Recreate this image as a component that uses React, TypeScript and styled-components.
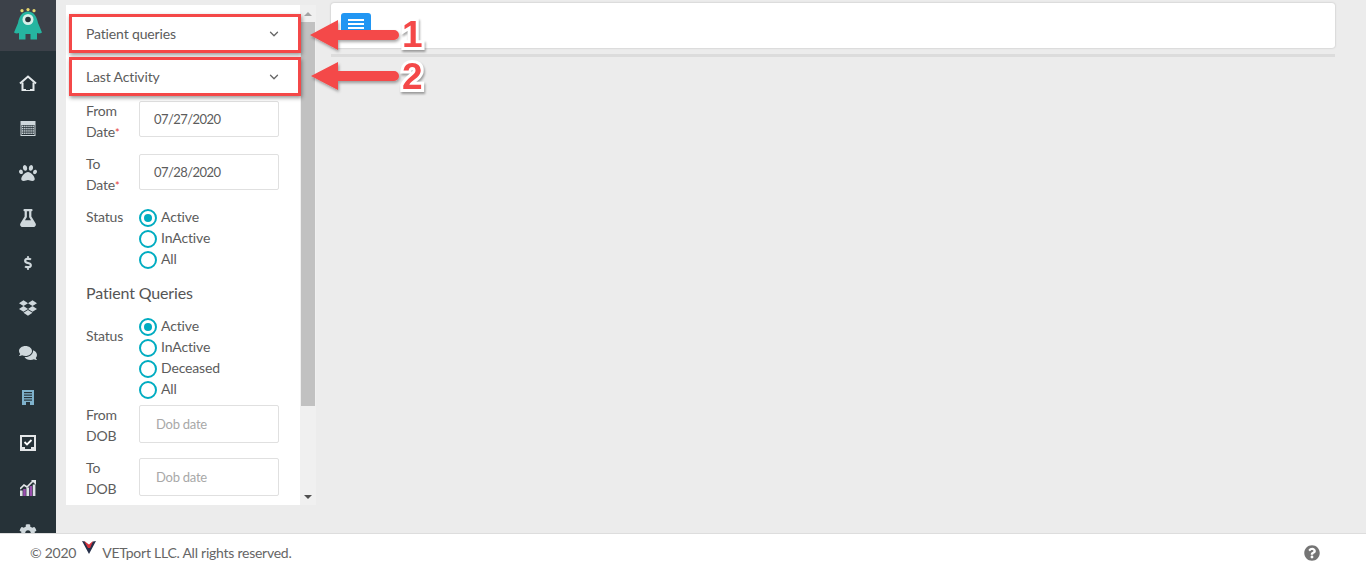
import React from "react";
import styled, { createGlobalStyle } from "styled-components";
import { FaPaw, FaFlask, FaDollarSign, FaDropbox, FaComments, FaCog, FaQuestionCircle } from "react-icons/fa";
import { ChevronDown } from "lucide-react";

const Global = createGlobalStyle`
  html, body { margin: 0; padding: 0; height: 570px; overflow: hidden; background: #ececec; }
  * { box-sizing: border-box; }
  body { font-family: "Lato", "Open Sans", sans-serif; font-size: 14px; color: #5c5c5c; letter-spacing: -0.15px; }
`;

const Page = styled.div`
  position: relative;
  width: 1366px;
  height: 570px;
  display: flex;
  flex-direction: column;
  overflow: hidden;
`;
const Main = styled.div`
  flex: 0 0 533px;
  display: flex;
  overflow: hidden;
`;
const Sidebar = styled.nav`
  flex: 0 0 56px;
  background: #263238;
  display: flex;
  flex-direction: column;
  overflow: hidden;
`;
const LogoBar = styled.div`
  flex: 0 0 51px;
  background: #3c4149;
  display: flex;
  align-items: center;
  justify-content: center;
`;
const NavList = styled.div`
  display: flex;
  flex-direction: column;
  padding-top: 9px;
`;
const NavItem = styled.div<{ $color?: string }>`
  flex: 0 0 45px;
  height: 45px;
  display: flex;
  align-items: center;
  justify-content: center;
  color: ${(p) => p.$color || "#cfd8dc"};
  font-size: 18px;
`;
const FilterColumn = styled.aside`
  flex: 0 0 250px;
  height: 500px;
  margin: 5px 0 0 10px;
  display: flex;
`;
const FilterPanel = styled.div`
  flex: 0 0 234px;
  background: #fff;
  padding: 8px 0 0 20px;
  overflow: hidden;
`;
const Dropdown = styled.div`
  height: 43px;
  width: 193px;
  display: flex;
  align-items: center;
  justify-content: space-between;
  padding: 0 0 2px 0;
`;
const Chevron = styled.span`
  display: flex;
  color: #666;
  margin-right: -2px;
`;
const DropdownGroup = styled.div`
  margin-bottom: 2px;
`;
const FormRow = styled.div<{ $gap?: number }>`
  display: grid;
  grid-template-columns: 53px 140px;
  margin-bottom: ${(p) => p.$gap ?? 12}px;
`;
const Label = styled.label<{ $top?: number }>`
  line-height: 21px;
  padding-top: ${(p) => p.$top ?? 0}px;
  margin-top: -1px;
  white-space: nowrap;
`;
const Req = styled.span`
  color: #e53935;
  font-size: 11px;
  line-height: 0;
`;
const Input = styled.div<{ $h: number; $placeholder?: boolean }>`
  height: ${(p) => p.$h}px;
  border: 1px solid #e0e0e0;
  border-radius: 2px;
  display: flex;
  align-items: center;
  padding-left: ${(p) => (p.$placeholder ? 16 : 14)}px;
  font-size: 13px;
  letter-spacing: ${(p) => (p.$placeholder ? "-0.25px" : "-0.55px")};
  color: ${(p) => (p.$placeholder ? "#a8a8a8" : "#5c5c5c")};
`;
const RadioGroup = styled.div`
  display: flex;
  flex-direction: column;
`;
const RadioRow = styled.div`
  height: 21px;
  display: flex;
  align-items: center;
  gap: 4px;
`;
const RadioText = styled.span`
  margin-top: -3px;
`;
const RadioDot = styled.span<{ $on?: boolean }>`
  width: 18px;
  height: 18px;
  margin-top: 1px;
  border-radius: 50%;
  border: 2px solid #00acc1;
  display: flex;
  align-items: center;
  justify-content: center;
  &::after {
    content: "";
    width: 8px;
    height: 8px;
    border-radius: 50%;
    background: ${(p) => (p.$on ? "#00acc1" : "transparent")};
  }
`;
const Heading = styled.h3`
  margin: 0 0 11px;
  font-size: 16px;
  font-weight: 400;
  line-height: 24px;
  color: #555;
`;
const Scrollbar = styled.div`
  flex: 0 0 16px;
  background: #f0f0f0;
  display: flex;
  flex-direction: column;
  align-items: center;
`;
const ScrollArrow = styled.div<{ $down?: boolean }>`
  flex: 0 0 17px;
  display: flex;
  align-items: center;
  justify-content: center;
  &::before {
    content: "";
    border-left: 4px solid transparent;
    border-right: 4px solid transparent;
    ${(p) => (p.$down ? "border-top: 4px solid #505050;" : "border-bottom: 4px solid #a3a3a3;")}
  }
`;
const ScrollThumb = styled.div`
  flex: 0 0 384px;
  width: 14px;
  background: #c1c1c1;
`;
const ScrollSpace = styled.div`
  flex: 1;
`;
const Content = styled.main`
  flex: 0 0 1004px;
  margin-left: 15px;
  padding-top: 3px;
  display: flex;
  flex-direction: column;
`;
const TopCard = styled.div`
  height: 45px;
  background: #fff;
  border-radius: 3px;
  box-shadow: 0 0 2px rgba(0, 0, 0, 0.25);
  padding: 10px 0 0 10px;
`;
const MenuButton = styled.button`
  width: 30px;
  height: 17px;
  border: 0;
  border-radius: 3px 3px 0 0;
  background: #2196f3;
  padding: 6px 7px 0;
  display: flex;
  flex-direction: column;
  gap: 2px;
`;
const MenuLine = styled.span`
  display: block;
  height: 2px;
  width: 16px;
  background: #fff;
`;
const Divider = styled.div`
  height: 3px;
  margin-top: 6px;
  background: #dcdcdc;
`;
const Footer = styled.footer`
  flex: 0 0 37px;
  background: #fff;
  border-top: 1px solid #ddd;
  display: flex;
  align-items: center;
  justify-content: space-between;
  padding: 0 46px 0 30px;
  color: #666;
`;
const Copy = styled.div`
  display: flex;
  align-items: center;
  gap: 6px;
  letter-spacing: -0.25px;
`;
const LogoMark = styled.span`
  display: flex;
  margin-top: -9px;
`;
const Help = styled.span`
  display: flex;
  font-size: 16px;
  color: #757575;
  padding-top: 2px;
`;
const RedBox = styled.div<{ $top: number }>`
  position: absolute;
  left: 69px;
  top: ${(p) => p.$top}px;
  width: 232px;
  height: 39px;
  border: 3px solid #f44848;
  box-shadow: 1px 2px 4px rgba(0, 0, 0, 0.4);
  pointer-events: none;
`;
const ArrowLayer = styled.svg`
  position: absolute;
  left: 305px;
  top: 10px;
  overflow: visible;
`;
const Numeral = styled.span<{ $top: number }>`
  position: absolute;
  left: 402px;
  top: ${(p) => p.$top}px;
  font-family: "Liberation Sans", sans-serif;
  font-size: 37px;
  font-weight: 700;
  line-height: 37px;
  color: #f44848;
  -webkit-text-stroke: 6px #fff;
  paint-order: stroke fill;
  filter: drop-shadow(1px 2px 1px rgba(0, 0, 0, 0.35));
`;

const Monster = () => (
  <svg width="30" height="36" viewBox="0 0 30 36">
    <circle cx="9" cy="2.7" r="1.6" fill="#e8d870" />
    <circle cx="15" cy="1.6" r="1.6" fill="#e8d870" />
    <circle cx="21" cy="2.7" r="1.6" fill="#e8d870" />
    <path d="M15 3.5C21 3.5 24 9 25 15L29 24.5C27 26 25 25.5 24 25V31.5H17.5V26H12.5V31.5H6V25C5 25.5 3 26 1 24.5L5 15C6 9 9 3.5 15 3.5z" fill="#26b5a0" />
    <circle cx="15" cy="11.5" r="5.5" fill="#d8efe8" />
    <circle cx="15" cy="11.5" r="2.8" fill="#263238" />
  </svg>
);
const Home = () => (
  <svg width="18" height="16" viewBox="0 0 18 16" fill="none" stroke="#e4e9eb" strokeWidth="2">
    <path d="M1 8.5L9 1.5L17 8.5" />
    <path d="M3.5 7.5V15H14.5V7.5" />
    <path d="M7 11h4v4H7z" fill="#263238" stroke="none" />
  </svg>
);
const Calendar = () => (
  <svg width="16" height="16" viewBox="0 0 16 16">
    <rect x="0.5" y="1" width="15" height="15" fill="#cfd8dc" />
    <rect x="1.5" y="5" width="13" height="10" fill="#263238" />
    {[0, 1, 2, 3].map((r) =>
      [0, 1, 2, 3, 4, 5].map((c) => <rect key={`${r}-${c}`} x={2 + c * 2.1} y={5.6 + r * 2.3} width="1.4" height="1.5" fill="#cfd8dc" />)
    )}
  </svg>
);
const Ledger = () => (
  <svg width="12" height="15" viewBox="0 0 12 15">
    <rect x="0" y="0" width="12" height="15" fill="#7fb2cc" />
    {[2, 4.5, 7, 9.5].map((y) => <rect key={y} x="2" y={y} width="8" height="1.2" fill="#263238" />)}
    <rect x="4" y="12" width="4" height="3" fill="#263238" />
  </svg>
);
const CheckBox = () => (
  <svg width="16" height="16" viewBox="0 0 16 16">
    <rect width="16" height="16" fill="#e3e6e8" />
    <rect x="2" y="2" width="12" height="10" fill="#263238" />
    <path d="M4.5 7l2.5 2.5L11.5 5" fill="none" stroke="#fff" strokeWidth="1.8" />
    <rect x="5" y="12" width="6" height="2" fill="#263238" />
  </svg>
);
const Chart = () => (
  <svg width="16" height="16" viewBox="0 0 16 16">
    {[0, 3.2, 6.4, 9.6, 12.8].map((x, i) => <rect key={x} x={x} y={10.5 - i * 1.5} width="2.6" height={5.5 + i * 1.5} fill={i % 2 ? "#9a4fae" : "#dfe4e7"} />)}
    <path d="M0 9l4-4 3 2 6-6" fill="none" stroke="#e3e6e8" strokeWidth="1.7" />
    <path d="M11 0h5v5z" fill="#e3e6e8" />
  </svg>
);
const VLogo = () => (
  <svg width="14" height="13" viewBox="0 0 14 13">
    <path d="M0 0l3 .5 4 4.5 4-4.5 3-.5-7 13z" fill="#26304a" />
    <path d="M2 0L7 3.5 11 0 8.2 7H6z" fill="#d8323c" />
  </svg>
);

const Radio = ({ label, on }: { label: string; on?: boolean }) => (
  <RadioRow>
    <RadioDot $on={on} />
    <RadioText>{label}</RadioText>
  </RadioRow>
);

export default function App() {
  return (
    <Page>
      <Global />
      <Main>
        <Sidebar>
          <LogoBar><Monster /></LogoBar>
          <NavList>
            <NavItem><Home /></NavItem>
            <NavItem><Calendar /></NavItem>
            <NavItem><FaPaw /></NavItem>
            <NavItem><FaFlask /></NavItem>
            <NavItem><FaDollarSign size={14} /></NavItem>
            <NavItem><FaDropbox /></NavItem>
            <NavItem><FaComments /></NavItem>
            <NavItem><Ledger /></NavItem>
            <NavItem><CheckBox /></NavItem>
            <NavItem><Chart /></NavItem>
            <NavItem><FaCog /></NavItem>
          </NavList>
        </Sidebar>
        <FilterColumn>
          <FilterPanel>
            <DropdownGroup>
              <Dropdown>Patient queries<Chevron><ChevronDown size={14} strokeWidth={2.2} /></Chevron></Dropdown>
              <Dropdown>Last Activity<Chevron><ChevronDown size={14} strokeWidth={2.2} /></Chevron></Dropdown>
            </DropdownGroup>
            <FormRow>
              <Label>From<br />Date<Req>*</Req></Label>
              <Input $h={36}>07/27/2020</Input>
            </FormRow>
            <FormRow>
              <Label>To<br />Date<Req>*</Req></Label>
              <Input $h={36}>07/28/2020</Input>
            </FormRow>
            <FormRow $gap={11}>
              <Label>Status</Label>
              <RadioGroup>
                <Radio label="Active" on />
                <Radio label="InActive" />
                <Radio label="All" />
              </RadioGroup>
            </FormRow>
            <Heading>Patient Queries</Heading>
            <FormRow $gap={5}>
              <Label $top={10}>Status</Label>
              <RadioGroup>
                <Radio label="Active" on />
                <Radio label="InActive" />
                <Radio label="Deceased" />
                <Radio label="All" />
              </RadioGroup>
            </FormRow>
            <FormRow>
              <Label>From<br />DOB</Label>
              <Input $h={38} $placeholder>Dob date</Input>
            </FormRow>
            <FormRow>
              <Label>To<br />DOB</Label>
              <Input $h={38} $placeholder>Dob date</Input>
            </FormRow>
          </FilterPanel>
          <Scrollbar>
            <ScrollArrow />
            <ScrollThumb />
            <ScrollSpace />
            <ScrollArrow $down />
          </Scrollbar>
        </FilterColumn>
        <Content>
          <TopCard>
            <MenuButton aria-label="menu">
              <MenuLine /><MenuLine /><MenuLine />
            </MenuButton>
          </TopCard>
          <Divider />
        </Content>
      </Main>
      <Footer>
        <Copy>© 2020 <LogoMark><VLogo /></LogoMark> VETport LLC. All rights reserved.</Copy>
        <Help><FaQuestionCircle /></Help>
      </Footer>
      <RedBox $top={14} />
      <RedBox $top={57} />
      <ArrowLayer width="95" height="85" viewBox="305 10 95 85">
        <defs>
          <filter id="as" x="-10%" y="-20%" width="120%" height="150%">
            <feDropShadow dx="1" dy="2" stdDeviation="1.5" floodColor="#000" floodOpacity="0.35" />
          </filter>
        </defs>
        <path d="M310 35L338 20V30H394a5 5 0 0 1 0 10H338V50z" fill="#f44848" filter="url(#as)" />
        <path d="M311 76L338 62V71H394a5 5 0 0 1 0 10H338V90z" fill="#f44848" filter="url(#as)" />
      </ArrowLayer>
      <Numeral $top={16}>1</Numeral>
      <Numeral $top={58}>2</Numeral>
    </Page>
  );
}
